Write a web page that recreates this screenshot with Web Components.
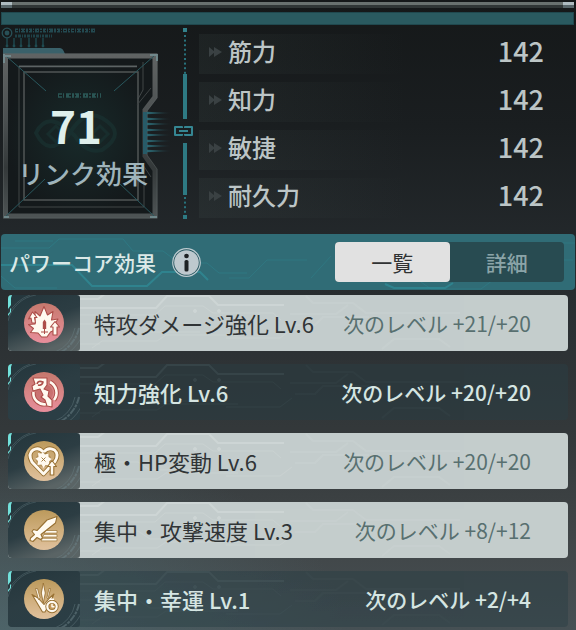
<!DOCTYPE html>
<html lang="ja">
<head>
<meta charset="utf-8">
<meta name="viewport" content="width=device-width, initial-scale=1">
<title>パワーコア効果</title>
<style>
  :root {
    --teal: #306c76;
    --teal-line: #2f8995;
    --text-light: #d5e5e2;
    --text-stat: #bcc5c6;
    --row-light: #c4cdcc;
    --font: "Noto Sans CJK JP", "Noto Sans", sans-serif;
  }
  body {
    margin: 0;
    min-height: 100vh;
    font-family: var(--font);
    color: var(--text-light);
    background:
      radial-gradient(ellipse 60% 30% at 0% 100%, rgba(82, 112, 118, .6), transparent),
      linear-gradient(#151819 0%, #1a1e20 20%, #23282b 38%, #2b3033 52%, #34393b 70%, #414648 86%, #465054 100%);
  }
</style>
</head>
<body>
<core-page>
  <link-badge slot="badge" level="71">リンク効果</link-badge>
  <stat-row slot="stats" value="142">筋力</stat-row>
  <stat-row slot="stats" value="142">知力</stat-row>
  <stat-row slot="stats" value="142">敏捷</stat-row>
  <stat-row slot="stats" value="142">耐久力</stat-row>

  <core-header>パワーコア効果</core-header>
  <core-list>
    <core-effect icon="crown" light>特攻ダメージ強化 Lv.6<span slot="next">次のレベル +21/+20</span></core-effect>
    <core-effect icon="mind">知力強化 Lv.6<span slot="next">次のレベル +20/+20</span></core-effect>
    <core-effect icon="heart" gold light>極・HP変動 Lv.6<span slot="next">次のレベル +20/+20</span></core-effect>
    <core-effect icon="sword" gold light>集中・攻撃速度 Lv.3<span slot="next">次のレベル +8/+12</span></core-effect>
    <core-effect icon="luck" gold>集中・幸運 Lv.1<span slot="next">次のレベル +2/+4</span></core-effect>
  </core-list>
</core-page>

<script>
/** ページ全体の枠：上部バー、リンクバッジ + ステータス、本体 */
class CorePage extends HTMLElement {
  constructor() {
    super();
    this.attachShadow({ mode: 'open' });
    this.shadowRoot.innerHTML = `
      <style>
        :host { display: block; }
        .rail {
          display: flex;
          justify-content: space-between;
          margin: 2px 2px 0 1px;
          height: 6px;
          background: linear-gradient(#69716f 0 3px, #303636 3px 6px);
        }
        .rail i { width: 11px; background: linear-gradient(#aebbc0 0 3px, #58666a 3px 6px); }
        .strip {
          box-sizing: border-box;
          margin: 4px 2px 0 1px;
          height: 13px;
          background: #2a5a60;
          border: 1px solid #20484e;
        }
        .top {
          display: grid;
          grid-template-columns: 199px 1fr;
          height: 209px;
        }
        .stats {
          display: flex;
          flex-direction: column;
          gap: 8px;
          padding-top: 9px;
        }
      </style>
      <div class="rail"><i></i><i></i></div>
      <div class="strip"></div>
      <div class="top">
        <slot name="badge"></slot>
        <div class="stats"><slot name="stats"></slot></div>
      </div>
      <slot></slot>
    `;
  }
}

/** 六角風フレームのリンクレベル表示 */
class LinkBadge extends HTMLElement {
  constructor() {
    super();
    this.attachShadow({ mode: 'open' });
    const dots = (y, n) => Array.from({ length: n }, (_, i) =>
      `<rect x="184" y="${y + i * 4.6}" width="2" height="2" fill="#28727c"/>`).join('');
    const ticks = [7, 14, 21, 29, 36, 43].map((x) =>
      `<path d="M${x} 38v9" stroke="#1f4a50" stroke-width="1.4"/><circle cx="${x}" cy="46" r="1.4" fill="#1f4a50"/>`).join('');
    const fins = [113, 119, 124, 130, 135, 141, 146, 151].map((y) =>
      `<path d="M147 ${y - 1.3}L172 ${y}L147 ${y + 1.3}z" fill="url(#fin)"/>`).join('');
    this.shadowRoot.innerHTML = `
      <style>
        :host { display: grid; }
        svg, .text { grid-area: 1 / 1; }
        svg { display: block; width: 199px; height: 209px; }
        .text { padding-top: 70px; }
        b {
          display: block;
          width: 152px;
          text-align: center;
          font-size: 44px;
          line-height: 60px;
          color: #dff0ec;
        }
        span {
          display: block;
          padding-left: 18px;
          font-size: 26px;
          font-weight: 500;
          line-height: 36px;
          color: #9fb4bb;
        }
      </style>
      <svg viewBox="0 25 199 209" aria-hidden="true">
        <defs>
          <linearGradient id="fin"><stop stop-color="#2b6873"/><stop offset="1" stop-color="#2b6873" stop-opacity="0"/></linearGradient>
          <linearGradient id="metal" x2="0" y2="1"><stop stop-color="#606363"/><stop offset=".4" stop-color="#4a4f50"/><stop offset=".7" stop-color="#34393a"/><stop offset="1" stop-color="#4d5354"/></linearGradient>
          <radialGradient id="glow"><stop stop-color="#182a2a"/><stop offset="1" stop-color="#14191b"/></radialGradient>
        </defs>
        <circle cx="7" cy="33" r="4.8" fill="none" stroke="#285057" stroke-width="1.3"/>
        <circle cx="7" cy="33" r="2.4" fill="#285057"/>
        <path d="M15 30.5h81" stroke="#234950" stroke-width="4" stroke-dasharray="3 1 1 1 4 1 2 1"/>
        <path d="M16 30.5h80" stroke="#15191b" stroke-width="1" stroke-dasharray="2 3 1 2"/>
        <path d="M15 36h37" stroke="#1f4147" stroke-width="3" stroke-dasharray="2 1 3 1 1 1"/>
        ${ticks}
        <path d="M3 48h57q3 0 5 6H3z" fill="#3a616a"/>
        <path d="M5 56H155V98L145 110V156L155 170V216H5z" fill="url(#glow)"/>
        <g fill="none" stroke="#1a3635" stroke-width="4" opacity=".55">
          <path d="M75 136Q48 108 36 133Q48 158 68 136Q84 108 102 118Q128 133 102 150Q86 154 75 136z"/>
          <path d="M48 134l8-8 8 8-8 8zM92 134l8-8 8 8-8 8z" stroke-width="3"/>
        </g>
        <path d="M5.5 56V216H155V170L145 156V110L155 97V56z" fill="none" stroke="url(#metal)" stroke-width="5"/>
        <path d="M3.5 54V218H157V169L147 155V111L157 98V54z" fill="none" stroke="#626869" stroke-width="1" opacity=".4"/>
        <path d="M19 66h118M19 66v141M138 99l5-9V62M19 207h125V168" fill="none" stroke="#414647"/>
        <path d="M19 66.5h118" stroke="#5c6364" stroke-width="1.5"/>
        <path d="M24 72H138V200H24z" fill="none" stroke="#505556" stroke-width="1.5"/>
        <path d="M137 105l14-17M143 165l8 12" stroke="#3d4243"/>
        <path d="M6 56L46 91M154 56L114 91M6 216L45 179M154 216L120 184" stroke="#29575d" stroke-width="1"/>
        <path d="M4 56h7M4 54v9M150 55h7M157 54v7M4 217h5M150 217h7" stroke="#769296" stroke-width="2" opacity=".8"/>
        <path d="M58 95.5h43" stroke="#2a5554" stroke-width="4.5" stroke-dasharray="4 1 1 2 5 1 2 1"/>
        <path d="M59 95.5h41" stroke="#15191b" stroke-width="1.5" stroke-dasharray="3 3 1 3"/>
        <rect x="143" y="112" width="4" height="42" fill="#285b68"/>
        ${fins}
        <rect x="183" y="28" width="4" height="4" fill="#33818b"/>
        ${dots(35, 9)}
        <rect x="183" y="74" width="4" height="45" fill="#2e7a83"/>
        <rect x="183" y="143" width="4" height="52" fill="#2e7a83"/>
        ${dots(197, 4)}
        <rect x="183" y="215" width="4" height="4" fill="#2e7a83"/>
        <path d="M182 128v-1h-7v8h7v-1M185 128v-1h7v8h-7v-1M179 131h9" fill="none" stroke="#358692" stroke-width="2" stroke-linejoin="round"/>
      </svg>
      <div class="text"><b>${this.getAttribute('level')}</b><span><slot></slot></span></div>
    `;
  }
}

class StatRow extends HTMLElement {
  constructor() {
    super();
    this.attachShadow({ mode: 'open' });
    this.shadowRoot.innerHTML = `
      <style>
        :host {
          display: flex;
          align-items: flex-start;
          height: 40px;
          padding: 0 32px 0 10px;
          color: var(--text-stat);
          font-weight: 500;
          background: linear-gradient(90deg, rgba(90, 110, 105, .11), transparent 55%);
        }
        svg { width: 13px; height: 12px; margin: 12px 6px 0 0; }
        .label { flex: 1; font-size: 24px; line-height: 34px; }
        .value { font-size: 27px; line-height: 34px; }
      </style>
      <svg viewBox="0 0 13 12" aria-hidden="true"><path d="M0 1l6 5-6 5zM5 1l8 5-8 5z" fill="#3a4143"/></svg>
      <span class="label"><slot></slot></span>
      <span class="value">${this.getAttribute('value')}</span>
    `;
  }
}

/** 見出しバー：タイトル、情報ボタン、一覧 / 詳細の切り替え */
class CoreHeader extends HTMLElement {
  constructor() {
    super();
    this.attachShadow({ mode: 'open' });
    this.shadowRoot.innerHTML = `
      <style>
        :host {
          display: flex;
          align-items: center;
          position: relative;
          height: 56px;
          margin: 0 1px;
          padding: 0 11px 0 8px;
          box-sizing: border-box;
          border-radius: 4px;
          overflow: hidden;
          background: var(--teal);
        }
        .lines { position: absolute; inset: 0; width: 100%; height: 100%; z-index: 0; }
        h2, button, .tabs { position: relative; }
        h2 { margin: 0 16px 0 0; font-size: 21px; font-weight: 500; line-height: 32px; color: #dbe9e7; }
        button { font-family: inherit; border: 0; padding: 0; cursor: pointer; }
        .info { display: flex; width: 29px; height: 29px; background: none; }
        .tabs {
          display: flex;
          flex: 0 1 229px;
          height: 40px;
          margin-left: auto;
          border-radius: 4px;
          background: #284b51;
        }
        .tabs button {
          flex: 1;
          border-radius: 4px;
          background: none;
          font-size: 21px;
          font-weight: 500;
          color: #8ba4a8;
        }
        .tabs button[aria-selected="true"] { background: #e1e1e1; color: #303233; font-weight: 400; }
      </style>
      <svg class="lines" viewBox="0 0 574 56" preserveAspectRatio="xMinYMid slice" fill="none" stroke="var(--teal-line)" aria-hidden="true">
        <path d="M0 31h71l20 21h55l15-14h38l8 8" stroke-width="2" opacity=".8"/>
        <path d="M0 42l14 12h42M52 7h-38M0 14h48l10-9h64l10 12h30l16 12h28l12 10h28" opacity=".45"/>
        <path d="M228 44h20l18-18h40M310 44l20-22M358 42l14-16h24l12-15h40M448 42h50l14-16h60M420 48l10 7h50l12-9h70M385 10h44l-10 8M560 9h14" opacity=".35"/>
        <path d="M384 50l9 4h51l8-5" stroke-width="2" opacity=".8"/>
      </svg>
      <h2><slot></slot></h2>
      <button class="info" type="button" aria-label="情報">
        <svg viewBox="0 0 29 29" width="29" height="29">
          <circle cx="14.5" cy="14.5" r="13.8" fill="#285861" stroke="#bdcbd0" stroke-width="1.2"/>
          <circle cx="14.5" cy="14.5" r="12.3" fill="#bec9ce"/>
          <circle cx="14.5" cy="8" r="2.3" fill="#1e2224"/>
          <rect x="12.5" y="12" width="4" height="11.5" rx="1.6" fill="#1e2224"/>
        </svg>
      </button>
      <div class="tabs" role="tablist">
        <button type="button" role="tab" aria-selected="true">一覧</button>
        <button type="button" role="tab" aria-selected="false">詳細</button>
      </div>
    `;

    const tabs = this.shadowRoot.querySelectorAll('[role="tab"]');
    tabs.forEach((tab) => tab.addEventListener('click', () => {
      tabs.forEach((t) => t.setAttribute('aria-selected', String(t === tab)));
    }));
  }
}

class CoreList extends HTMLElement {
  constructor() {
    super();
    this.attachShadow({ mode: 'open' });
    this.shadowRoot.innerHTML = `
      <style>
        :host { display: flex; flex-direction: column; gap: 13px; padding: 5px 8px 3px; }
      </style>
      <slot></slot>
    `;
  }
}

// 40x40 の円形アイコンの中身
const ICONS = {
  crown: `
    <path d="M20 3.500L23.500 12 29 8.500 27.500 17 34 16 29.500 23 33 26 26.500 29 23 34H17.500L14 30 6.500 29.500 9.500 25.500 4.500 21.500 11 21 11 8.500 16 13z"/>
    <path d="M8.500 9l4.500 5.500h-2.500l1 5.500h-3.500l-1-5-2.500 1zM31 18.500l4.500 5.500h-2.500v8h-4v-8h-2.500z"/>
    <path d="M18.800 26V19l1.700-2.500 1.700 2.500v7z" fill="var(--ink)" stroke="none"/>
    <path d="M17 29h7M20.500 26v5" fill="none" stroke-width="1"/>`,
  mind: `
    <circle cx="20" cy="21" r="9" fill="var(--ink)" stroke="none" opacity=".35"/>
    <g fill="none">
      <path d="M26 10a12 12 0 0 1 4 18M9.500 20a11 11 0 0 0 13.500 12" stroke-width="4.500"/>
      <path d="M26 10a12 12 0 0 1 4 18M9.500 20a11 11 0 0 0 13.500 12" stroke="#fffaf0" stroke-width="2.600"/>
    </g>
    <path d="M9 6h14v7l-3 4 5 2-1 5 4 4v7l-5-1-2-6-4-3 2-2-3-6-7 2-1-5 3-2z"/>
    <path d="M13 12q1-4 6-2-1 4-5 3" fill="none" stroke-width="1.600"/>`,
  heart: `
    <g fill="none">
      <path d="M19.500 33L8 21Q3.500 13 9 9q6-3.500 10.500 2.500Q24 5.500 30.500 9q5 4.500.5 11.500z" stroke-width="4.600"/>
      <path d="M19.500 33L8 21Q3.500 13 9 9q6-3.500 10.500 2.500Q24 5.500 30.500 9q5 4.500.5 11.500z" stroke="#fffaf0" stroke-width="2.800"/>
    </g>
    <circle cx="19.500" cy="18.500" r="7.500" fill="var(--ink)" stroke="none" opacity=".5"/>
    <path d="M18.500 11l2.500 2.500 3.500-1v3.500l3 2-2.500 2.500.5 4-4-.5-2 3-2-3.500-4 .5.5-4-2.500-2.500 3-1.500-.500-4 3.500.5z" stroke="none"/>
    <path d="M17.500 16.500l4 4M21.500 16.500l-4 4" fill="none" stroke-width=".9"/>
    <path d="M28 19.500l4.500 6h-2.700v8.500h-3.600v-8.500h-2.700z"/>`,
  sword: `
    <path d="M22 20.500h11v2.600H20zM20 24.400h13v2.600H18.500zM18.500 28.300h14.500v2.600H17z" stroke-width=".7"/>
    <path d="M33 6.500l-1.500 6.500-14.500 11.500 1.500 3.500-2 1.500-3.500-2-4 4-3-1 .5-2.500 4-3.500-2.500-3 1.500-2 3.500 1L23 10z"/>`,
  luck: `
    <path d="M8 15.500l6 3.500 6 6.500 5.500-6.500 4.500-4-3.500 8-5.500 10h-2.500z"/>
    <path d="M11.500 9.500l2 0 2.500 9-1.500 2zM26.500 9.500l-1.500 0-2 9 1 1.500z" stroke-width=".8"/>
    <path d="M19.300 4l2 10-2 10-2-10z" stroke-width=".9"/>
    <g fill="none">
      <circle cx="28" cy="27.500" r="4.700" fill="#c49a5c" stroke-width="4"/>
      <circle cx="28" cy="27.500" r="4.700" stroke="#fffaf0" stroke-width="2.200"/>
      <path d="M26 20.200h4M28 24.800v3h2.500" stroke="#fffaf0" stroke-width="1.500"/>
    </g>`,
};

/** 効果 1 行。属性: icon, gold（金色の円）, light（明るい背景） */
class CoreEffect extends HTMLElement {
  constructor() {
    super();
    this.attachShadow({ mode: 'open' });
    this.shadowRoot.innerHTML = `
      <style>
        :host {
          --ink: #ad4e49;
          --line: #54676b;
          display: flex;
          align-items: center;
          position: relative;
          height: 56px;
          border-radius: 4px;
          overflow: hidden;
          line-height: 32px;
          font-weight: 500;
          background: rgba(42, 62, 68, .48);
        }
        :host([light]) { --line: #dae0df; background: var(--row-light); color: #303436; font-weight: 400; }
        :host([gold]) { --ink: #987133; }
        .lines { position: absolute; inset: 0 0 0 72px; height: 100%; opacity: .45; }
        :host(:not([light])) .lines { opacity: .25; }
        .tile { position: relative; flex: none; width: 72px; height: 56px; }
        .name { position: relative; flex: 1; padding-left: 14px; font-size: 22px; white-space: nowrap; }
        .next { position: relative; padding-right: 37px; font-size: 21px; white-space: nowrap; }
        :host([light]) .next { color: #587070; }
      </style>
      <svg class="lines" width="488" viewBox="0 0 488 56" fill="none" stroke="var(--line)" aria-hidden="true">
        <path d="M0 4h18l8-6M0 13h76l11-12h42l9 9h66" stroke-width="2"/>
        <path d="M0 20h75l10-9h38l10 7h60l8 7M0 29h58l12 8h50M12 53l10-7h55l9-6h72M0 49h20M146 43h54l12-9" opacity=".6"/>
        <path d="M226 1l7 7h40l13 10h94M210 19h46l12-9M215 30h20l8-8h46M302 54l12-10h45l11 8" stroke-width="2" opacity=".35"/>
        <circle cx="115" cy="16" r="1.5" fill="var(--line)"/><circle cx="139" cy="16" r="1.5" fill="var(--line)"/>
      </svg>
      <svg class="tile" viewBox="0 0 72 56" aria-hidden="true">
        <defs>
          <linearGradient id="tile" x2=".5" y2="1"><stop stop-color="#24363c"/><stop offset=".55" stop-color="#2c3d43"/><stop offset="1" stop-color="${this.hasAttribute('light') ? '#5a6465' : '#2b3e45'}"/></linearGradient>
          <linearGradient id="disc" x2="0" y2="1">${this.hasAttribute('gold')
            ? '<stop stop-color="#bc9a5c"/><stop offset=".5" stop-color="#cfae7c"/><stop offset="1" stop-color="#e0c19d"/>'
            : '<stop stop-color="#c5786d"/><stop offset=".5" stop-color="#d88585"/><stop offset="1" stop-color="#e78e9b"/>'}</linearGradient>
        </defs>
        <rect width="72" height="56" rx="3" fill="url(#tile)"/>
        <g fill="none" stroke="#6d8489">
          <path d="M0 20A39 39 0 0 1 22 0M0 26A34 34 0 0 1 28 0" stroke-width=".8" opacity=".45"/>
          <path d="M71 33A36 36 0 0 1 53 57" stroke-width="2" stroke-dasharray="7 1 3 1" opacity=".5"/>
          <path d="M67 33A32 32 0 0 1 47 57M75 38A40 40 0 0 1 60 58" stroke-width=".8" opacity=".5"/>
        </g>
        <path d="M0 0h4l-1 3v7l-3 4zM0 19l2-2v-3l1-1v4L0 21z" fill="#72e1db"/>
        <circle cx="36" cy="28" r="20" fill="url(#disc)"/>
        <g transform="translate(16 8)" fill="#fffaf0" stroke="var(--ink)" stroke-width="1.1" stroke-linejoin="round">
          ${ICONS[this.getAttribute('icon')]}
        </g>
      </svg>
      <span class="name"><slot></slot></span>
      <span class="next"><slot name="next"></slot></span>
    `;
  }
}

customElements.define('core-page', CorePage);
customElements.define('link-badge', LinkBadge);
customElements.define('stat-row', StatRow);
customElements.define('core-header', CoreHeader);
customElements.define('core-list', CoreList);
customElements.define('core-effect', CoreEffect);
</script>
</body>
</html>
